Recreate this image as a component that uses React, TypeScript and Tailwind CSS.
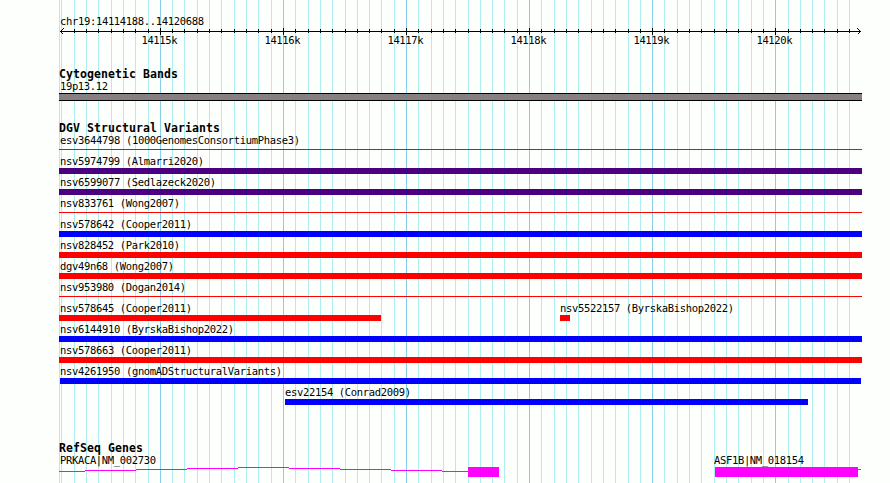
import React from 'react';

const minorLines = [
    59, 61, 74, 86, 98, 111, 123, 135, 148, 172, 184, 197, 209, 221, 234, 246, 258, 271,
    295, 308, 320, 332, 345, 357, 369, 381, 394, 418, 431, 443, 455, 468, 480, 492, 504, 517,
    541, 554, 566, 578, 591, 603, 615, 628, 640, 664, 677, 689, 701, 714, 726, 738, 751, 763,
    788, 800, 812, 824, 837, 849,
];
const majorLines = [160, 283, 406, 529, 652, 775];

type LabelProps = {
    text: string;
    width: number;
    bold?: boolean;
};

// 6px per character, 7px for the bold headings
const Label = ({ text, width, bold }: LabelProps) => (
    <svg className="block h-[13px] overflow-visible" width={width} height={13}>
        <text
            x={0}
            y={10}
            textLength={width}
            lengthAdjust="spacing"
            className={bold ? 'text-[11.5px] font-bold' : 'text-[10.5px]'}
        >
            {text}
        </text>
    </svg>
);

type Feature = {
    name: string;
    start: number;
    width: number;
    color: string;
    thin?: boolean;
};

const variants: Feature[][] = [
    [{ name: 'esv3644798 (1000GenomesConsortiumPhase3)', start: 0, width: 803, color: 'bg-[#ff0000]', thin: true }],
    [{ name: 'nsv5974799 (Almarri2020)', start: 0, width: 803, color: 'bg-[#4b0082]' }],
    [{ name: 'nsv6599077 (Sedlazeck2020)', start: 0, width: 803, color: 'bg-[#4b0082]' }],
    [{ name: 'nsv833761 (Wong2007)', start: 0, width: 803, color: 'bg-[#ff0000]', thin: true }],
    [{ name: 'nsv578642 (Cooper2011)', start: 0, width: 803, color: 'bg-[#0000ff]' }],
    [{ name: 'nsv828452 (Park2010)', start: 0, width: 803, color: 'bg-[#ff0000]' }],
    [{ name: 'dgv49n68 (Wong2007)', start: 0, width: 803, color: 'bg-[#ff0000]' }],
    [{ name: 'nsv953980 (Dogan2014)', start: 0, width: 803, color: 'bg-[#ff0000]', thin: true }],
    [
        { name: 'nsv578645 (Cooper2011)', start: 0, width: 322, color: 'bg-[#ff0000]' },
        { name: 'nsv5522157 (ByrskaBishop2022)', start: 501, width: 10, color: 'bg-[#ff0000]' },
    ],
    [{ name: 'nsv6144910 (ByrskaBishop2022)', start: 0, width: 803, color: 'bg-[#0000ff]' }],
    [{ name: 'nsv578663 (Cooper2011)', start: 0, width: 803, color: 'bg-[#ff0000]' }],
    [{ name: 'nsv4261950 (gnomADStructuralVariants)', start: 1, width: 801, color: 'bg-[#0000ff]' }],
    [{ name: 'esv22154 (Conrad2009)', start: 226, width: 523, color: 'bg-[#0000ff]' }],
];

const Grid = () => (
    <svg className="absolute inset-0" width={890} height={483} shapeRendering="crispEdges">
        {minorLines.map((x) => (
            <rect key={x} x={x} y={0} width={1} height={483} fill="#afeeee" />
        ))}
        {majorLines.map((x) => (
            <rect key={x} x={x} y={0} width={1} height={483} fill="#87ceeb" />
        ))}
    </svg>
);

const Ruler = () => (
    <svg className="block" width={803} height={20} shapeRendering="crispEdges">
        <rect x={1} y={4} width={801} height={1} fill="black" />
        {minorLines.slice(2).map((x) => (
            <rect key={x} x={x - 59} y={2} width={1} height={4} fill="black" />
        ))}
        {majorLines.map((x) => (
            <rect key={x} x={x - 59} y={1} width={1} height={7} fill="black" />
        ))}
        <path d="M4.5 1.5L1.5 4.5L4.5 7.5M798.5 1.5L801.5 4.5L798.5 7.5" fill="none" stroke="black" />
        {majorLines.map((x, i) => (
            <text key={x} x={x - 77.5} y={17} textLength={36} className="text-[10.5px]">
                {`${14115 + i}k`}
            </text>
        ))}
    </svg>
);

const VariantRow = ({ features }: { features: Feature[] }) => (
    <div className="grid h-[21px]">
        {features.map((f) => (
            <div key={f.name} className="col-start-1 row-start-1" style={{ marginLeft: f.start }}>
                <div className={f.start === 0 ? 'pl-px' : ''}>
                    <Label text={f.name} width={f.name.length * 6} />
                </div>
                <div
                    className={`${f.color} ${f.thin ? 'mt-[2px] h-px' : 'h-[6px]'}`}
                    style={{ width: f.width }}
                />
            </div>
        ))}
    </div>
);

const Genes = () => (
    <div className="-mt-px">
        <div className="flex">
            <div className="w-[655px] pl-px">
                <Label text="PRKACA|NM_002730" width={96} />
            </div>
            <Label text="ASF1B|NM_018154" width={90} />
        </div>
        <svg className="block" width={803} height={16} shapeRendering="crispEdges" fill="#ff00ff">
            {/* intron, one step per 51px */}
            <rect x={0} y={4} width={26} height={1} />
            <rect x={26} y={3} width={51} height={1} />
            <rect x={77} y={2} width={51} height={1} />
            <rect x={128} y={1} width={51} height={1} />
            <rect x={179} y={0} width={51} height={1} />
            <rect x={230} y={1} width={51} height={1} />
            <rect x={281} y={2} width={51} height={1} />
            <rect x={332} y={3} width={51} height={1} />
            <rect x={383} y={4} width={26} height={1} />
            <rect x={409} y={0} width={31} height={10} />
            <rect x={656} y={0} width={143} height={10} />
            <rect x={799} y={2} width={3} height={1} />
        </svg>
    </div>
);

const App = () => {
    return (
        <div className="relative h-[483px] w-[890px] overflow-hidden bg-[#fdfffc] font-['DejaVu_Sans_Mono',monospace] text-black">
            <Grid />
            <div className="relative ml-[59px] w-[803px] pt-[15px]">
                <div className="pl-px">
                    <Label text="chr19:14114188..14120688" width={144} />
                </div>
                <div className="-mt-px">
                    <Ruler />
                </div>

                {/* Cytogenetic Bands */}
                <div className="mt-[21px]">
                    <Label text="Cytogenetic Bands" width={119} bold />
                    <div className="-mt-px pl-px">
                        <Label text="19p13.12" width={48} />
                    </div>
                    <div className="h-2 border-y border-black bg-[#868082]" />
                </div>

                {/* Structural Variants */}
                <div className="mt-[21px]">
                    <Label text="DGV Structural Variants" width={161} bold />
                    <div className="-mt-px">
                        {variants.map((row) => (
                            <VariantRow key={row[0].name} features={row} />
                        ))}
                    </div>
                </div>

                {/* Genes */}
                <div className="mt-[35px]">
                    <Label text="RefSeq Genes" width={84} bold />
                    <Genes />
                </div>
            </div>
        </div>
    );
};

export default App;
